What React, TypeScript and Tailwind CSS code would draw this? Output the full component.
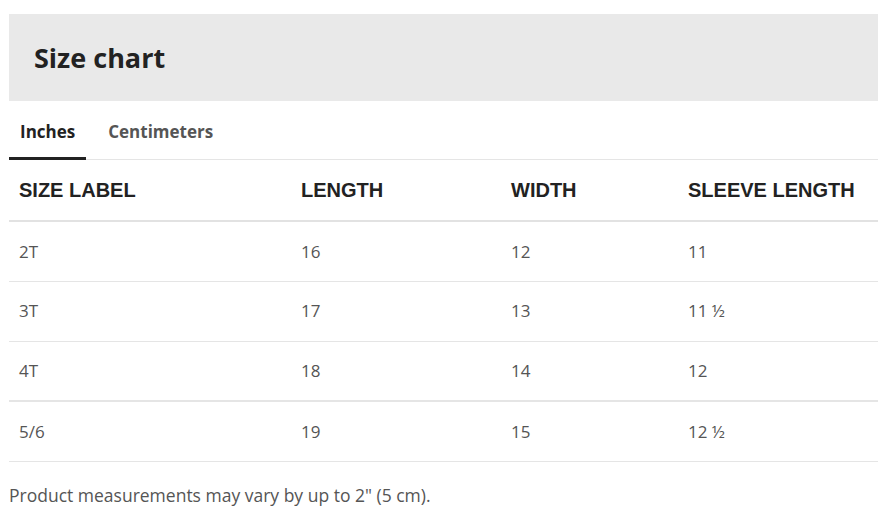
import React from 'react'

interface Row {
  size: string
  length: string
  width: string
  sleeve: string
}

const rows: Row[] = [
  { size: '2T', length: '16', width: '12', sleeve: '11' },
  { size: '3T', length: '17', width: '13', sleeve: '11 ½' },
  { size: '4T', length: '18', width: '14', sleeve: '12' },
  { size: '5/6', length: '19', width: '15', sleeve: '12 ½' },
]

export default function App() {
  return (
    <div className="w-[878px] h-[532px] bg-white pt-[14px] pl-[9px] overflow-hidden font-['Open_Sans',sans-serif]">
      <div className="h-[87px] bg-[#e9e9e9] flex items-center pl-[25px] pt-[2px]">
        <h1 className="text-[27px] font-bold text-[#222]">Size chart</h1>
      </div>

      <div className="flex border-b border-[#e5e5e5] h-[59px]">
        <button className="px-[11px] pt-[18px] text-[17px] font-bold text-[#222] border-b-[3px] border-[#222] h-[59px] flex items-start">
          Inches
        </button>
        <button className="ml-[22px] pt-[18px] text-[17px] font-bold text-[#555] h-[59px] flex items-start">
          Centimeters
        </button>
      </div>

      <table className="w-full border-collapse text-left">
        <thead>
          <tr className="h-[61px] border-b-2 border-[#e2e2e2]">
            <th className="pl-[10px] w-[292px] font-['Liberation_Sans',sans-serif] font-bold text-[20px] text-[#222]">SIZE LABEL</th>
            <th className="w-[210px] font-['Liberation_Sans',sans-serif] font-bold text-[20px] text-[#222]">LENGTH</th>
            <th className="w-[177px] font-['Liberation_Sans',sans-serif] font-bold text-[20px] text-[#222]">WIDTH</th>
            <th className="font-['Liberation_Sans',sans-serif] font-bold text-[20px] text-[#222]">SLEEVE LENGTH</th>
          </tr>
        </thead>
        <tbody>
          {rows.map((r, i) => (
            <tr key={i} className={`h-[60px] text-[17px] text-[#555] ${i === 2 ? 'border-b-2' : 'border-b'} border-[#e5e5e5]`}>
              <td className="pl-[10px]">{r.size}</td>
              <td>{r.length}</td>
              <td>{r.width}</td>
              <td>{r.sleeve}</td>
            </tr>
          ))}
        </tbody>
      </table>

      <p className="mt-[20px] text-[17.5px] text-[#555]">Product measurements may vary by up to 2" (5 cm).</p>
    </div>
  )
}
